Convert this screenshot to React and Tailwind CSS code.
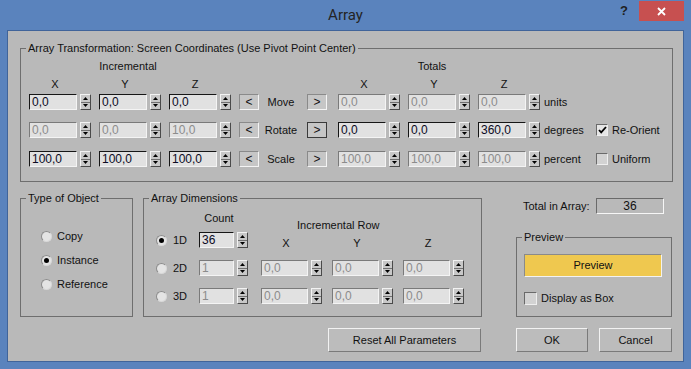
import React from "react";

const Up = () => (
  <svg width="5" height="3" viewBox="0 0 5 3"><path d="M2.5 0 L5 3 L0 3 Z" fill="#000" /></svg>
);
const Down = () => (
  <svg width="5" height="3" viewBox="0 0 5 3"><path d="M0 0 L5 0 L2.5 3 Z" fill="#000" /></svg>
);

function Spinner() {
  return (
    <div className="ml-[3px] flex h-[16px] w-[11px] shrink-0 flex-col border border-t-[#f2f2f2] border-l-[#f2f2f2] border-b-[#4a4a4a] border-r-[#4a4a4a] bg-[#c8c8c8]">
      <div className="flex flex-1 items-center justify-center border-b border-b-[#707070]"><Up /></div>
      <div className="flex flex-1 items-center justify-center"><Down /></div>
    </div>
  );
}

function Field({ v, dis, w = "w-[48px]" }) {
  const tone = dis
    ? "border-t-[#7a7a7a] border-l-[#7a7a7a] text-[#8c8c8c]"
    : "border-t-[#161616] border-l-[#161616] text-[#0b0b24]";
  return (
    <div className={`flex h-[16px] shrink-0 items-center border border-b-[#f4f4f4] border-r-[#f4f4f4] bg-[#e1e1e1] pl-[2px] text-[12px] leading-none ${tone} ${w}`}>
      {v}
    </div>
  );
}

function Spin({ v, dis, w, first }) {
  return (
    <div className={`flex items-center ${first ? "" : "ml-[8px]"}`}>
      <Field v={v} dis={dis} w={w} />
      <Spinner />
    </div>
  );
}

function Spin2({ v, dis, first }) {
  return (
    <div className={`flex items-center ${first ? "" : "ml-[10px]"}`}>
      <Field v={v} dis={dis} w="w-[47px]" />
      <Spinner />
    </div>
  );
}

function ArrowBtn({ ch, dark }) {
  const b = dark
    ? "border-[#3a3a3a]"
    : "border-t-[#8a8a8a] border-l-[#8a8a8a] border-b-[#f4f4f4] border-r-[#f4f4f4]";
  return (
    <div className={`flex h-[16px] w-[20px] shrink-0 items-center justify-center border bg-[#c6c6c6] text-[12px] leading-none ${b}`}>
      {ch}
    </div>
  );
}

function Check({ on, big }) {
  return (
    <div className={`flex shrink-0 items-center justify-center border border-t-[#6a6a6a] border-l-[#6a6a6a] border-b-[#eeeeee] border-r-[#eeeeee] ${on ? "bg-[#e6e6e6]" : "bg-[#d2d2d2]"} ${big ? "h-[13px] w-[13px]" : "h-[12px] w-[12px]"}`}>
      {on && (
        <svg width="9" height="8" viewBox="0 0 9 8">
          <path d="M1 4 L3.2 6.4 L8 1" stroke="#000" strokeWidth="1.8" fill="none" />
        </svg>
      )}
    </div>
  );
}

function Radio({ on }) {
  return (
    <div className="flex h-[11px] w-[11px] shrink-0 items-center justify-center rounded-full border border-t-[#8c8c8c] border-l-[#8c8c8c] border-b-[#d8d8d8] border-r-[#d8d8d8] bg-[#e4e4e4]">
      {on && <div className="h-[5px] w-[5px] rounded-full bg-[#000]" />}
    </div>
  );
}

function Group({ title, className, children }) {
  return (
    <fieldset className={`shrink-0 border border-[#6e6e6e] ${className}`}>
      <legend className="ml-[5px] px-[2px] text-[11px] leading-[13px]">{title}</legend>
      {children}
    </fieldset>
  );
}

function Btn({ children, className }) {
  return (
    <div className={`flex h-[24px] items-center justify-center border border-t-[#f2f2f2] border-l-[#f2f2f2] border-b-[#7a7a7a] border-r-[#7a7a7a] bg-[#bcbcbc] text-[11px] ${className}`}>
      {children}
    </div>
  );
}

function Row({ vals, dis, label, dark, tot, totDis, unit, check, checkOn, className }) {
  return (
    <div className={`ml-[8px] flex h-[16px] items-center ${className}`}>
      <Spin v={vals[0]} dis={dis} first />
      <Spin v={vals[1]} dis={dis} />
      <Spin v={vals[2]} dis={dis} />
      <div className="ml-[8px]"><ArrowBtn ch="<" /></div>
      <div className="w-[44px] text-center text-[11px]">{label}</div>
      <div className="ml-[4px]"><ArrowBtn ch=">" dark={dark} /></div>
      <div className="ml-[11px] flex items-center">
        <Spin v={tot[0]} dis={totDis} first />
        <Spin v={tot[1]} dis={totDis} />
        <Spin v={tot[2]} dis={totDis} />
      </div>
      <div className="ml-[4px] w-[52px] text-[11px]">{unit}</div>
      {check && (
        <div className="flex items-center">
          <Check on={checkOn} />
          <span className="ml-[4px] text-[11px]">{check}</span>
        </div>
      )}
    </div>
  );
}

export default function App() {
  return (
    <div className="flex h-[369px] w-[691px] flex-col overflow-hidden bg-[#5a83bd] font-['Liberation_Sans',Arial,sans-serif] text-[11px] text-[#111]">
      {/* title bar */}
      <div className="grid h-[30px] shrink-0 grid-cols-[1fr_auto_1fr]">
        <div />
        <div className="pt-[6px] font-['Roboto',sans-serif] text-[15px] leading-[18px] text-[#242424]">Array</div>
        <div className="flex justify-end">
          <div className="mt-[4px] mr-[11px] text-[13px] font-bold leading-[14px] text-[#1f1f1f]">?</div>
          <div className="mt-[1px] mr-[7px] flex h-[20px] w-[45px] items-center justify-center bg-[#c75050]">
            <svg width="9" height="9" viewBox="0 0 9 9">
              <path d="M1 1 L8 8 M8 1 L1 8" stroke="#fff" strokeWidth="1.8" />
            </svg>
          </div>
        </div>
      </div>

      {/* client */}
      <div className="mx-[7px] h-[332px] shrink-0 border border-[#40649a] bg-[#b9b9b9] pl-[12px] pt-[11px]">
        <Group title="Array Transformation: Screen Coordinates (Use Pivot Point Center)" className="h-[140px] w-[653px]">
          <div className="flex flex-col">
            <div className="mt-[5px] flex h-[13px] items-center text-[11px]">
              <span className="w-[214px] text-center">Incremental</span>
              <span className="w-[394px] text-center">Totals</span>
            </div>
            <div className="ml-[8px] mt-[5px] flex h-[13px] items-center">
              <span className="w-[52px] text-center">X</span>
              <span className="ml-[18px] w-[52px] text-center">Y</span>
              <span className="ml-[18px] w-[52px] text-center">Z</span>
              <span className="ml-[117px] w-[52px] text-center">X</span>
              <span className="ml-[18px] w-[52px] text-center">Y</span>
              <span className="ml-[18px] w-[52px] text-center">Z</span>
            </div>
            <Row className="mt-[3px]" vals={["0,0", "0,0", "0,0"]} label="Move" tot={["0,0", "0,0", "0,0"]} totDis unit="units" />
            <Row className="mt-[12px]" vals={["0,0", "0,0", "10,0"]} dis label="Rotate" dark tot={["0,0", "0,0", "360,0"]} unit="degrees" check="Re-Orient" checkOn />
            <Row className="mt-[13px]" vals={["100,0", "100,0", "100,0"]} label="Scale" tot={["100,0", "100,0", "100,0"]} totDis unit="percent" check="Uniform" />
          </div>
        </Group>

        <div className="mt-[10px] flex items-start">
          <Group title="Type of Object" className="h-[125px] w-[113px]">
            <div className="ml-[20px] mt-[25px] flex flex-col gap-[11px] text-[11px]">
              {[["Copy", false], ["Instance", true], ["Reference", false]].map(([t, on]) => (
                <div key={t} className="flex h-[13px] items-center">
                  <Radio on={on} />
                  <span className="ml-[5px]">{t}</span>
                </div>
              ))}
            </div>
          </Group>

          <Group title="Array Dimensions" className="ml-[10px] h-[125px] w-[339px]">
            <div className="flex items-start">
              <div className="ml-[12px] flex flex-col">
                <div className="ml-[43px] mt-[7px] h-[13px] w-[40px] text-center text-[11px] leading-[13px]">Count</div>
                {[["1D", true, "36"], ["2D", false, "1"], ["3D", false, "1"]].map(([t, on, c], i) => (
                  <div key={t} className={`flex h-[16px] items-center ${i === 0 ? "mt-[7px]" : "mt-[12px]"}`}>
                    <Radio on={on} />
                    <span className="ml-[6px] w-[26px] text-[11px]">{t}</span>
                    <Field v={c} dis={!on} w="w-[35px]" />
                    <Spinner />
                  </div>
                ))}
              </div>
              <div className="ml-[13px] flex flex-col">
                <div className="mt-[14px] h-[13px] pl-[36px] leading-[13px]">Incremental Row</div>
                <div className="mt-[5px] flex h-[13px] items-center">
                  <span className="w-[50px] text-center">X</span>
                  <span className="ml-[21px] w-[50px] text-center">Y</span>
                  <span className="ml-[21px] w-[50px] text-center">Z</span>
                </div>
                <div className="mt-[10px] flex items-center">
                  <Spin2 v="0,0" dis first />
                  <Spin2 v="0,0" dis />
                  <Spin2 v="0,0" dis />
                </div>
                <div className="mt-[12px] flex items-center">
                  <Spin2 v="0,0" dis first />
                  <Spin2 v="0,0" dis />
                  <Spin2 v="0,0" dis />
                </div>
              </div>
            </div>
          </Group>

          <div className="ml-[34px] mt-[6px] flex w-[156px] flex-col">
            <div className="flex h-[16px] items-center">
              <span className="ml-[7px] text-[11px]">Total in Array:</span>
              <div className="ml-auto mr-[8px] flex h-[16px] w-[68px] items-center justify-center border border-t-[#6a6a6a] border-l-[#6a6a6a] border-b-[#f6f6f6] border-r-[#f6f6f6] text-[12px]">
                36
              </div>
            </div>
            <Group title="Preview" className="mt-[17px] h-[86px] w-[156px]">
              <div className="flex flex-col">
                <div className="ml-[7px] mt-[10px] flex h-[23px] w-[138px] items-center justify-center border border-t-[#8a8a8a] border-l-[#8a8a8a] border-b-[#f2f2f2] border-r-[#f2f2f2] bg-[#efc84f] text-[11px]">
                  Preview
                </div>
                <div className="ml-[7px] mt-[13px] flex items-center">
                  <Check big />
                  <span className="ml-[4px] text-[11px]">Display as Box</span>
                </div>
              </div>
            </Group>
          </div>
        </div>

        <div className="mt-[11px] flex">
          <Btn className="ml-[308px] w-[153px]">Reset All Parameters</Btn>
          <Btn className="ml-[35px] w-[72px]">OK</Btn>
          <Btn className="ml-[11px] w-[73px]">Cancel</Btn>
        </div>
      </div>
    </div>
  );
}
